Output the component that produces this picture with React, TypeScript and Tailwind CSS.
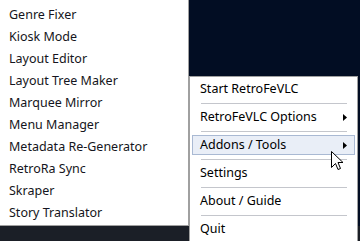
const tools = [
  'Genre Fixer',
  'Kiosk Mode',
  'Layout Editor',
  'Layout Tree Maker',
  'Marquee Mirror',
  'Menu Manager',
  'Metadata Re-Generator',
  'RetroRa Sync',
  'Skraper',
  'Story Translator',
]

const mainItems = [
  { label: 'Start RetroFeVLC' },
  { label: 'RetroFeVLC Options', sub: true },
  { label: 'Addons / Tools', sub: true, active: true },
  { label: 'Settings' },
  { label: 'About / Guide' },
  { label: 'Quit' },
]

function Arrow() {
  return (
    <svg width="4" height="7" viewBox="0 0 4 7" className="shrink-0">
      <path d="M0 0 L4 3.5 L0 7 Z" fill="#000" />
    </svg>
  )
}

function Cursor() {
  return (
    <svg width="13" height="20" viewBox="0 0 13 20" className="absolute left-[331px] top-[151px]">
      <path
        d="M0.5 0.5 L0.5 16.5 L4.5 12.5 L7 18.5 L9.5 17.5 L7 11.5 L12 11.5 Z"
        fill="#fff"
        stroke="#000"
        strokeWidth="1"
      />
    </svg>
  )
}

export default function App() {
  return (
    <div className="relative w-[360px] h-[241px] overflow-hidden bg-[#020d23] font-['Noto_Sans',sans-serif] text-[12.5px] leading-none">
      {/* taskbar strip */}
      <div className="absolute left-0 right-0 top-[226px] bottom-0 bg-[#1b1f27]" />

      {/* tools submenu */}
      <div className="absolute left-0 top-0 w-[189px] h-[226px] bg-white border-r border-b border-[#a0a0a0] pt-[4px] flex flex-col">
        {tools.map((t) => (
          <div key={t} className="h-[22px] pl-[9px] flex items-center text-[#151520]">
            {t}
          </div>
        ))}
      </div>

      {/* tray menu */}
      <div className="absolute left-[189px] top-[76px] w-[169px] h-[180px] bg-white border border-[#a0a0a0] px-[2px] pt-[2px] flex flex-col">
        {mainItems.map((it, i) => (
          <div key={it.label} className="flex flex-col">
            {i > 0 && (
              <div className="h-[8px] flex items-center">
                <div className="ml-[9px] w-[146px] h-px bg-[#c4c6cc]" />
              </div>
            )}
            <div
              className={
                it.active
                  ? 'h-[20px] flex items-center justify-between pl-[7px] pr-[7px] border border-[#a9b9d3] bg-[#e9eef7] text-black'
                  : 'h-[20px] flex items-center justify-between pl-[7px] pr-[7px] border border-transparent text-black'
              }
            >
              <span>{it.label}</span>
              {it.sub && <Arrow />}
            </div>
          </div>
        ))}
      </div>

      <Cursor />
    </div>
  )
}
